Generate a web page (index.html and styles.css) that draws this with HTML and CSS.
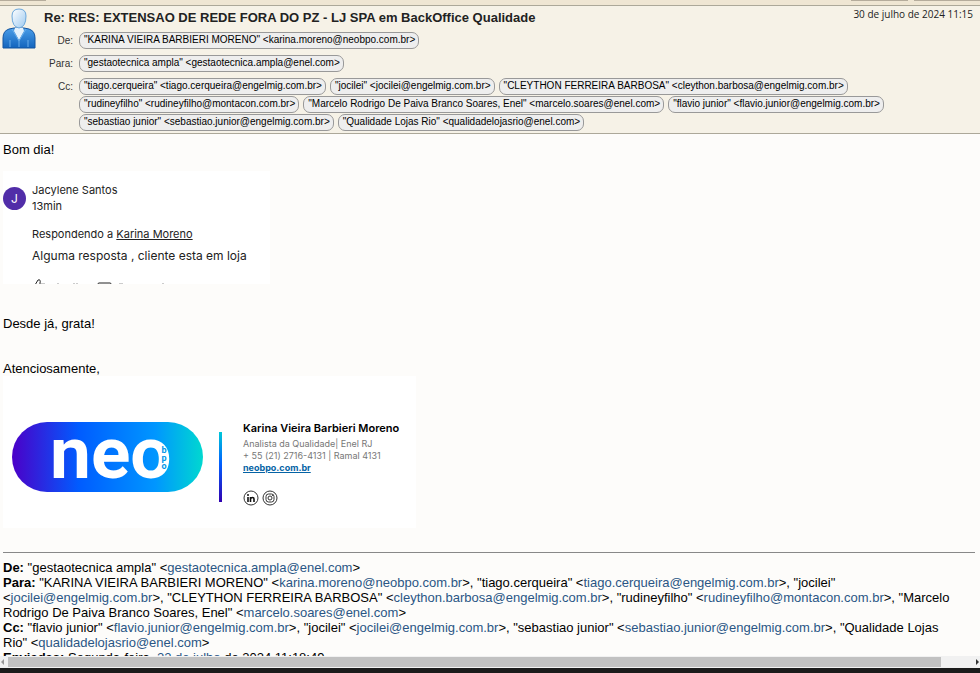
FILE: index.html
```html
<!DOCTYPE html>
<html lang="pt-BR">
<head>
<meta charset="utf-8">
<title>Re: RES: EXTENSAO DE REDE FORA DO PZ</title>
<link rel="stylesheet" href="styles.css">
</head>
<body>
<div class="toolbar"><span class="tab tab-first"></span><span class="tab tab-second"></span><span class="tab tab-last"></span></div>
<header class="mail-header">
  <svg class="avatar" viewBox="0 0 34 42" aria-hidden="true">
    <defs>
      <linearGradient id="head" x1="0" y1="0" x2="1" y2="1"><stop offset="0" stop-color="#fff"/><stop offset="1" stop-color="#9cc9f0"/></linearGradient>
      <linearGradient id="coat" x1="0" y1="0" x2="0" y2="1"><stop offset="0" stop-color="#4a9de8"/><stop offset="1" stop-color="#1264bd"/></linearGradient>
    </defs>
    <path d="M1 40V30Q1 23 7 21L12 20H22L27 21Q33 23 33 30V40Z" fill="url(#coat)" stroke="#1254a0"/>
    <path d="M13 20H21L22 23L17 32L12 23Z" fill="#e4f1fc"/>
    <path d="M10 21L17 33L24 21M17 33V39M8 32V39M26 32V39" fill="none" stroke="#6aaeea"/>
    <path d="M10 8Q10 1 17 1Q24 1 24 8Q24 19 17 20Q10 19 10 8Z" fill="url(#head)" stroke="#6aa7dc"/>
  </svg>
  <div class="summary">
    <div class="subject-line"><h1>Re: RES: EXTENSAO DE REDE FORA DO PZ - LJ SPA em BackOffice Qualidade</h1><time>30 de julho de 2024 11:15</time></div>
    <dl class="fields">
      <dt>De:</dt><dd><span class="chip">"KARINA VIEIRA BARBIERI MORENO" &lt;karina.moreno@neobpo.com.br&gt;</span></dd>
      <dt>Para:</dt><dd><span class="chip">"gestaotecnica ampla" &lt;gestaotecnica.ampla@enel.com&gt;</span></dd>
      <dt>Cc:</dt><dd><span class="chip">"tiago.cerqueira" &lt;tiago.cerqueira@engelmig.com.br&gt;</span><span class="chip">"jocilei" &lt;jocilei@engelmig.com.br&gt;</span><span class="chip">"CLEYTHON FERREIRA BARBOSA" &lt;cleython.barbosa@engelmig.com.br&gt;</span><span class="chip">"rudineyfilho" &lt;rudineyfilho@montacon.com.br&gt;</span><span class="chip">"Marcelo Rodrigo De Paiva Branco Soares, Enel" &lt;marcelo.soares@enel.com&gt;</span><span class="chip">"flavio junior" &lt;flavio.junior@engelmig.com.br&gt;</span><span class="chip">"sebastiao junior" &lt;sebastiao.junior@engelmig.com.br&gt;</span><span class="chip">"Qualidade Lojas Rio" &lt;qualidadelojasrio@enel.com&gt;</span></dd>
    </dl>
  </div>
</header>
<main class="mail-body">
  <p class="greeting">Bom dia!</p>
  <section class="comment">
    <span class="initial">J</span>
    <div class="comment-text">
      <p>Jacylene Santos</p>
      <p>13min</p>
      <p class="reply">Respondendo a <a href="#">Karina Moreno</a></p>
      <p class="answer">Alguma resposta , cliente esta em loja</p>
      <svg class="actions" viewBox="0 0 140 12" aria-hidden="true"><path d="M3 6L6 1Q9 0 8 4V5M66 11V5Q66 4 67 4H78Q79 4 79 5V11" fill="none" stroke="#222"/><path d="M9 5H13M25 5H27M41 5H43M44 5H46M87 5H91M130 5H132" stroke="#999"/></svg>
    </div>
  </section>
  <p class="thanks">Desde já, grata!</p>
  <p class="closing">Atenciosamente,</p>
  <section class="signature">
    <div class="logo"><span class="neo">neo</span><span class="bpo"><span>b</span><span>p</span><span>o</span></span></div>
    <span class="divider"></span>
    <div class="contact">
      <strong>Karina Vieira Barbieri Moreno</strong>
      <span>Analista da Qualidade| Enel RJ</span>
      <span>+ 55 (21) 2716-4131 | Ramal 4131</span>
      <a href="#">neobpo.com.br</a>
      <div class="social">
        <svg viewBox="0 0 16 16" role="img" aria-label="LinkedIn"><circle cx="8" cy="8" r="7" fill="#fff" stroke="#333"/><path d="M5 7V12M7.500 7V12M7.500 9Q8 7.500 9.500 7.500Q11 7.500 11 9V12" fill="none" stroke="#111" stroke-width="1.600"/><circle cx="5" cy="5" r="1" fill="#111"/></svg>
        <svg viewBox="0 0 16 16" role="img" aria-label="Instagram"><circle cx="8" cy="8" r="7" fill="#fff" stroke="#333"/><rect x="4" y="4" width="8" height="8" rx="2.500" fill="none" stroke="#333"/><circle cx="8" cy="8" r="2" fill="none" stroke="#333"/><circle cx="10.500" cy="5.500" r=".6" fill="#333"/></svg>
      </div>
    </div>
  </section>
  <hr>
  <div class="quoted">
    <p><b>De:</b> "gestaotecnica ampla" &lt;<a href="#">gestaotecnica.ampla@enel.com</a>&gt;</p>
    <p><b>Para:</b> "KARINA VIEIRA BARBIERI MORENO" &lt;<a href="#">karina.moreno@neobpo.com.br</a>&gt;, "tiago.cerqueira" &lt;<a href="#">tiago.cerqueira@engelmig.com.br</a>&gt;, "jocilei" &lt;<a href="#">jocilei@engelmig.com.br</a>&gt;, "CLEYTHON FERREIRA BARBOSA" &lt;<a href="#">cleython.barbosa@engelmig.com.br</a>&gt;, "rudineyfilho" &lt;<a href="#">rudineyfilho@montacon.com.br</a>&gt;, "Marcelo Rodrigo De Paiva Branco Soares, Enel" &lt;<a href="#">marcelo.soares@enel.com</a>&gt;</p>
    <p><b>Cc:</b> "flavio junior" &lt;<a href="#">flavio.junior@engelmig.com.br</a>&gt;, "jocilei" &lt;<a href="#">jocilei@engelmig.com.br</a>&gt;, "sebastiao junior" &lt;<a href="#">sebastiao.junior@engelmig.com.br</a>&gt;, "Qualidade Lojas Rio" &lt;<a href="#">qualidadelojasrio@enel.com</a>&gt;</p>
    <p><b>Enviadas:</b> Segunda-feira, <a href="#">22 de julho</a> de 2024 11:18:49</p>
  </div>
</main>
<div class="scrollbar" aria-hidden="true"><svg viewBox="0 0 8 12"><path d="M4 3V9L1 6Z" fill="#999"/></svg><span class="thumb"></span><svg viewBox="0 0 8 12"><path d="M4 3V9L7 6Z" fill="#333"/></svg></div>
<footer class="edge"></footer>
</body>
</html>
```
FILE: styles.css
```css
* { box-sizing: border-box; }
body { margin: 0; height: 100vh; display: flex; flex-direction: column; overflow: hidden; background: #fdfcfa; color: #000; font-family: "Liberation Sans", Arial, sans-serif; font-size: 13px; line-height: 15px; }
p, h1, dl, dd { margin: 0; }
.toolbar { flex: none; display: flex; height: 6px; background: #efe6d3; border-bottom: 1px solid #aca899; gap: 6px; }
.tab { height: 1px; background: #b5ac9c; }
.tab-first { width: 46px; margin-right: auto; }
.tab-second { width: 57px; }
.tab-last { width: 66px; }
.mail-header { flex: none; display: flex; padding: 2px 7px 2px 2px; gap: 8px; background: #f6f2e7; border-bottom: 1px solid #aca899; }
.avatar { flex: none; width: 34px; height: 42px; }
.summary { flex: 1; min-width: 0; }
.subject-line { display: flex; justify-content: space-between; align-items: flex-start; height: 24px; }
h1 { font-size: 13px; line-height: 19px; color: #222; }
time { font: 10px/13px "Open Sans", sans-serif; color: #222; }
.fields { display: grid; grid-template-columns: 29px 1fr; column-gap: 6px; row-gap: 5px; font-size: 10px; line-height: 18px; }
dt { text-align: right; color: #333; }
dd { display: flex; flex-wrap: wrap; column-gap: 4px; row-gap: 1px; }
.chip { height: 17px; padding: 0 3px 0 4px; border: 1px solid #999; border-radius: 7px; background: #eee; line-height: 14px; white-space: nowrap; }
.mail-body { flex: 1; min-height: 0; overflow: hidden; padding: 8px 5px 0 3px; }
.comment { display: flex; gap: 6px; width: 267px; height: 113px; margin-top: 14px; padding-top: 11px; overflow: hidden; background: #fff; font-family: Inter, sans-serif; font-size: 11px; line-height: 16px; color: #222; }
.initial { flex: none; width: 23px; height: 23px; margin-top: 5px; border-radius: 50%; background: #512da8; color: #fff; text-align: center; font-size: 12px; line-height: 23px; }
.comment a { color: inherit; }
.reply { margin-top: 12px; }
.answer { margin-top: 4px; font-size: 12px; line-height: 20px; }
.actions { display: block; width: 140px; height: 12px; margin-top: 13px; }
.thanks { margin-top: 32px; }
.closing { margin-top: 30px; }
.signature { display: flex; align-items: flex-start; width: 413px; height: 152px; padding: 46px 9px 0; background: #fff; }
.logo { display: flex; width: 191px; height: 70px; padding-left: 38px; border-radius: 35px; background: linear-gradient(90deg, #4b00c8, #005cff 35%, #0096ff 75%, #00d8d0); color: #fff; }
.neo { font: bold 73px/62px Roboto, sans-serif; }
.bpo { display: flex; flex-direction: column; margin-left: -10px; padding-top: 24px; color: #0096e8; font: bold 9px/8px Roboto, sans-serif; }
.divider { width: 3px; height: 70px; margin: 10px 21px 0 16px; background: linear-gradient(#00c8d8, #0060ff 45%, #3000b0); }
.contact { display: flex; flex-direction: column; font-family: Inter, sans-serif; font-size: 9px; line-height: 12px; color: #777; }
.contact strong { margin-bottom: 4px; font-size: 11px; font-weight: 600; color: #000; }
.contact a { font-weight: bold; color: #0563a5; }
.social { display: flex; gap: 3px; margin-top: 16px; }
.social svg { width: 16px; height: 16px; }
hr { height: 1px; margin: 24px 0 7px; border: 0; background: #888; }
.quoted { padding-right: 16px; }
.quoted a { color: #2a5685; text-decoration: none; }
.scrollbar { flex: none; display: flex; height: 12px; background: #f1f1f1; }
.scrollbar svg { width: 8px; height: 12px; }
.thumb { width: 933px; margin: 1px auto 1px 0; background: #c1c1c1; }
.edge { flex: none; height: 5px; background: #1b1b1b; }
```
